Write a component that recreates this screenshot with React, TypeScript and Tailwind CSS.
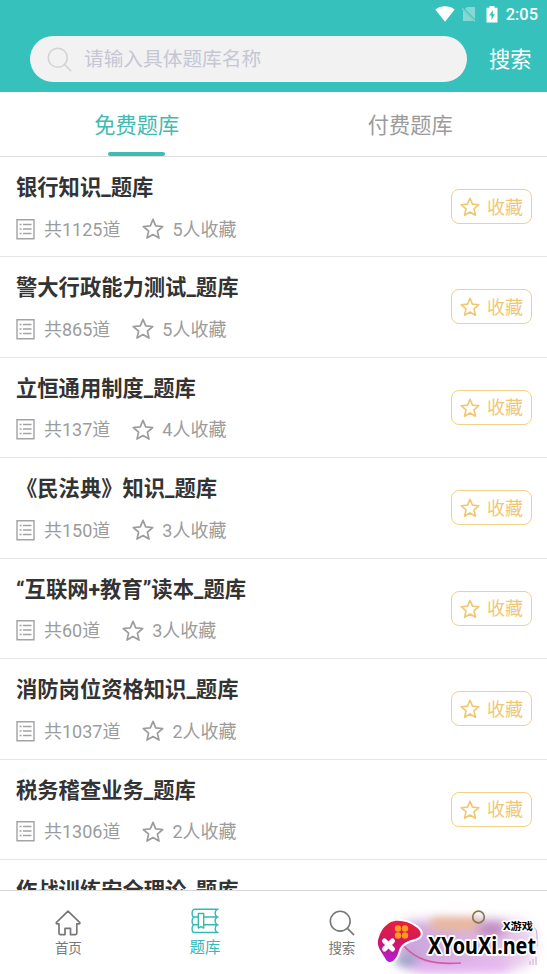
import { type ReactNode } from "react";

const banks = [
  { title: "银行知识_题库", total: 1125, stars: 5 },
  { title: "警大行政能力测试_题库", total: 865, stars: 5 },
  { title: "立恒通用制度_题库", total: 137, stars: 4 },
  { title: "《民法典》知识_题库", total: 150, stars: 3 },
  { title: "“互联网+教育”读本_题库", total: 60, stars: 3 },
  { title: "消防岗位资格知识_题库", total: 1037, stars: 2 },
  { title: "税务稽查业务_题库", total: 1306, stars: 2 },
  { title: "作战训练安全理论_题库", total: 980, stars: 2 },
];

function StarIcon({ className }: { className: string }) {
  return (
    <svg viewBox="0 0 22 22" fill="none" stroke="currentColor" strokeLinejoin="round" className={className}>
      <path d="M11 1.4 13.7 7.9 20.7 8.5 15.4 13.1 17 20.1 11 16.5 5 20.1 6.6 13.1 1.3 8.5 8.3 7.9Z" />
    </svg>
  );
}

function ListIcon() {
  return (
    <svg viewBox="0 0 19 21" fill="none" stroke="currentColor" className="w-[19px] h-[21px] text-[#a3a3a3]">
      <path d="M1 .7h17v19H1z" strokeWidth="1.4" />
      <path d="M3.6 5.5h2M7 5.5h8.5M3.6 10h2M7 10h8.5M3.6 14.5h2M7 14.5h8.5" strokeWidth="1.3" />
    </svg>
  );
}

function SearchIcon({ className }: { className: string }) {
  return (
    <svg viewBox="0 0 26 26" fill="none" stroke="currentColor" strokeLinecap="round" className={className}>
      <circle cx="11.2" cy="11.2" r="9.9" />
      <path d="M18.4 18.4 24.6 24.6" />
    </svg>
  );
}

function HomeIcon() {
  return (
    <svg viewBox="0 0 26 26" fill="none" stroke="currentColor" strokeWidth="1.7" strokeLinejoin="round" className="w-[26px] h-[26px]">
      <path d="M13 1.2 1.5 12.3c-.5.8 0 1.6.8 1.6H4V23.3c0 .9.5 1.3 1.2 1.3H10v-6.3h5.5v6.3h5c.8 0 1.3-.5 1.3-1.3v-9.4h2.1c.8 0 1.3-.8.7-1.6Z" />
    </svg>
  );
}

function BooksIcon() {
  return (
    <svg viewBox="0 0 28 26" fill="none" stroke="currentColor" strokeWidth="1.4" strokeLinejoin="round" className="w-[28px] h-[26px]">
      <path d="M27.5 1.3H3.5C.3 1.3.3 9 3.5 9H7M3.5 9C.3 9 .3 16.8 3.5 16.8H7M3.5 16.8C.3 16.8.3 24.5 3.5 24.5h24" />
      <path d="M7.3 5.5h5.4v14.500l-2.700-1.300-2.700 1.300Z" />
      <path d="M12.7 9h14.800M12.7 16.8h14.800M26 1.3c-2.5 2.4-2.5 5.3 0 7.7-2.5 2.4-2.5 5.4 0 7.8-2.5 2.4-2.5 5.3 0 7.7" />
    </svg>
  );
}

function StatusBar() {
  return (
    <div className="flex h-[28px] items-center justify-end pr-[9px] text-white">
      <svg viewBox="0 0 20 16" className="mr-[7px] h-4 w-5" fill="currentColor">
        <path d="M.3 3.5C6 -.9 14 -.9 19.7 3.5L10 15.8Z" />
      </svg>
      <svg viewBox="0 0 14 16" className="mr-[10px] h-4 w-[14px]">
        <path d="M5 1h8v14H1V5Z" fill="#85d9d4" />
        <path d="M0 1.5 13.5 15.5" stroke="#37c1bc" strokeWidth="2.4" />
        <path d="M.3 2.5 13 15.5" stroke="#85d9d4" strokeWidth="1.2" />
      </svg>
      <svg viewBox="0 0 12 17" className="mr-[8px] h-[17px] w-3">
        <path d="M3.5 0h5v1.8h3V16.5H.5V1.8h3Z" fill="#fff" />
        <path d="M6.8 4 3.2 9.5h2.3V14l3.4-5.7H6.8Z" fill="#37c1bc" />
      </svg>
      <span className="pt-px text-[16.4px] leading-5 font-medium">2:05</span>
    </div>
  );
}

function Tab({ label, active }: { label: string; active?: boolean }) {
  return (
    <button className={`flex h-full flex-1 flex-col items-center justify-between text-[21.2px] ${active ? "text-[#41bbb1]" : "text-[#9b9b9b]"}`}>
      <span className="pt-[18px] leading-[32px]">{label}</span>
      {active && <span className="h-1 w-[57px] rounded-full bg-[#41bbb1]" />}
    </button>
  );
}

function BankRow({ title, total, stars }: { title: string; total: number; stars: number }) {
  return (
    <div className="flex h-[100.45px] shrink-0 items-start justify-between border-b border-[#e6e6e6] pr-[15px] pl-4">
      <div>
        <h2 className="pt-[15px] text-[21.3px] leading-8 font-bold text-[#333]">{title}</h2>
        <div className="mt-[11px] flex h-[28px] items-center text-[18px] text-[#9c9c9c]">
          <ListIcon />
          <span className="ml-[9px]">共{total}道</span>
          <StarIcon className="ml-[22px] h-[22px] w-[22px] stroke-[1.7]" />
          <span className="ml-2">{stars}人收藏</span>
        </div>
      </div>
      <button className="mt-[32px] flex h-[35px] w-[81px] items-center justify-center rounded-[8px] border border-[#f2d188] pt-px text-[18px] text-[#f0c873]">
        <StarIcon className="mr-[7px] h-5 w-5 stroke-[1.8]" />
        收藏
      </button>
    </div>
  );
}

function NavItem({ icon, label, active }: { icon: ReactNode; label?: string; active?: boolean }) {
  return (
    <button className={`flex flex-1 flex-col items-center ${active ? "pt-[17px] text-[#34b9b3]" : "pt-[19px] text-[#777]"}`}>
      {icon}
      {label && <span className={active ? "mt-[2px] text-[15.5px] leading-[24px]" : "text-[13.5px] leading-[24px]"}>{label}</span>}
    </button>
  );
}

// site badge laid over the last nav item
function SiteBadge() {
  return (
    <div className="absolute right-0 bottom-0 h-[66px] w-[177px] overflow-hidden">
      <div className="absolute top-[13px] left-[27px] h-[48px] w-[138px] rounded-[18px] bg-gradient-to-r from-[#c9a3dc] via-[#d9b4e0] to-[#eed6f0] blur-[6px]" />
      <div className="absolute top-[10px] left-[60px] h-[12px] w-[50px] rounded-full bg-[#e9b591] blur-[5px]" />
      <div className="absolute top-[15px] left-[108px] h-[12px] w-[28px] rounded-full bg-[#b67bb5] blur-[6px]" />
      <div className="absolute top-[48px] left-[26px] h-[9px] w-[22px] rounded-full bg-[#91a2c2] blur-[5px]" />
      <div className="absolute top-[54px] left-[45px] h-[9px] w-[95px] rounded-full bg-[#e2a8f0] blur-[6px]" />
      <svg viewBox="0 0 177 66" fill="none" className="absolute inset-0 h-full w-full">
        <defs>
          <linearGradient id="pad" x1="25" y1="13" x2="18" y2="57" gradientUnits="userSpaceOnUse">
            <stop stopColor="#e5203a" />
            <stop offset=".45" stopColor="#cf1762" />
            <stop offset="1" stopColor="#ac1df0" />
          </linearGradient>
        </defs>
        <circle cx="108.5" cy="9" r="5.8" stroke="#827852" strokeWidth="1.7" />
        <path d="M33 37C46 52 62 57 91 55" stroke="#d759a3" strokeWidth="1.700" />
        <path d="M160 18c6 1 7 4 7 12v8M160 57v-4M163 57v-6M166 57v-8" stroke="#bd94bb" strokeWidth=".8" />
        <path d="M20 14.500C27 11 38 13 46 19c7 5 6 10-1 12-8 2-12 4-15 9-2 4-2 8-5 11-3 4-8 4-10-1C12 44 5 38 9 29 11 23 14 18 20 14.500Z" fill="url(#pad)" stroke="#fff" strokeWidth="4" paintOrder="stroke" />
        <g fill="#ff9820">
          <circle cx="28" cy="20.500" r="3.200" />
          <circle cx="35" cy="20.500" r="3.200" />
          <circle cx="28" cy="27.500" r="3.200" />
          <circle cx="35" cy="27.500" r="3.200" />
        </g>
        <path d="m14.500 33 8 8M22.500 33l-8 8" stroke="#fff" strokeWidth="5" strokeLinecap="round" />
        <g fill="#000" stroke="#fff" strokeLinejoin="round" paintOrder="stroke" fontFamily="Noto Sans, Noto Sans CJK SC, sans-serif" fontWeight="700">
          <text x="133" y="22" fontSize="10" strokeWidth="3" textLength="30" lengthAdjust="spacingAndGlyphs">X游戏</text>
          <text x="58" y="46" fontSize="23.5" strokeWidth="4" textLength="108" lengthAdjust="spacingAndGlyphs">XYouXi.net</text>
        </g>
      </svg>
    </div>
  );
}

export default function App() {
  return (
    <div className="relative flex h-[974px] w-[547px] flex-col overflow-hidden bg-white font-['Roboto','Noto_Sans_CJK_SC',sans-serif]">
      <header className="h-[92px] shrink-0 bg-[#37c1bc]">
        <StatusBar />
        <div className="mt-[8px] flex items-center pl-[30px]">
          <div className="flex h-[46px] w-[437px] items-center rounded-full bg-[#f2f2f2] pl-[17px]">
            <SearchIcon className="h-[25px] w-[25px] stroke-[1.6] text-[#d3d3d3]" />
            <span className="ml-[12px] pt-[2px] text-[19.7px] leading-7 text-[#c5c6d6]">请输入具体题库名称</span>
          </div>
          <button className="ml-[22px] pt-[2px] text-[21.2px] leading-8 text-white">搜索</button>
        </div>
      </header>

      <div className="flex h-[65px] shrink-0 border-b border-[#dedede]">
        <Tab label="免费题库" active />
        <Tab label="付费题库" />
      </div>

      <main className="flex min-h-0 flex-1 flex-col overflow-hidden">
        {banks.map((bank) => (
          <BankRow key={bank.title} {...bank} />
        ))}
      </main>

      <nav className="flex h-[84px] shrink-0 border-t border-[#d8d8d8] bg-white">
        <NavItem icon={<HomeIcon />} label="首页" />
        <NavItem icon={<BooksIcon />} label="题库" active />
        <NavItem icon={<SearchIcon className="h-[26px] w-[26px] stroke-[1.6]" />} label="搜索" />
        <NavItem icon={null} />
      </nav>

      <SiteBadge />
    </div>
  );
}
